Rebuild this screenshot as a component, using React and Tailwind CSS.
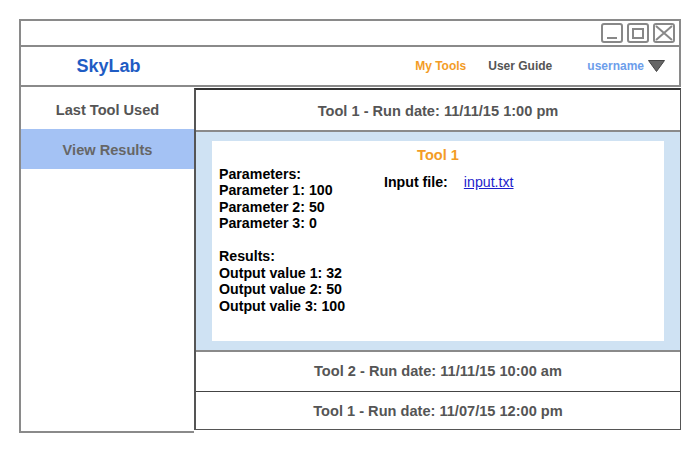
import React from 'react';

const WindowButton = ({ children }) => (
  <div className="w-[22px] h-[20px] border-2 border-[#888] rounded-[3px] flex items-center justify-center">
    {children}
  </div>
);

const RunRow = ({ label, className = '' }) => (
  <div className={`h-[40px] flex items-center justify-center text-[14.6px] font-bold text-[#555] ${className}`}>
    {label}
  </div>
);

export default function App() {
  return (
    <div className="w-[700px] h-[452px] bg-white font-['Liberation_Sans',Arial,sans-serif]">
      <div className="pl-[19px] pt-[19px] w-[681px]">
        {/* Window frame: title bar + header */}
        <div className="border-2 border-[#8a8a8a]">
          <div className="h-[26px] border-b-2 border-[#8a8a8a] flex items-center justify-end gap-[4px] pr-[4px]">
            <WindowButton>
              <div className="w-[10px] h-[2px] bg-[#888] mt-[10px]" />
            </WindowButton>
            <WindowButton>
              <div className="w-[12px] h-[11px] border-2 border-[#888]" />
            </WindowButton>
            <WindowButton>
              <svg width="18" height="16" viewBox="0 0 18 16">
                <path d="M1 1 L17 15 M17 1 L1 15" stroke="#888" strokeWidth="2" />
              </svg>
            </WindowButton>
          </div>
          <div className="h-[38px] flex items-center">
            <div className="w-[175px] text-center text-[18px] font-bold text-[#1f5cc4]">SkyLab</div>
            <div className="flex-1 flex items-center justify-end text-[12px] font-bold pr-[14px]">
              <span className="text-[#f39c26]">My Tools</span>
              <span className="text-[#555] ml-[22px]">User Guide</span>
              <span className="text-[#6d9eeb] ml-[35px]">username</span>
              <svg width="17" height="12" viewBox="0 0 17 12" className="ml-[4px]">
                <path d="M0.5 0.5 L16.5 0.5 L8.5 11.5 Z" fill="#666" stroke="#444" />
              </svg>
            </div>
          </div>
        </div>

        {/* Body */}
        <div className="flex">
          <div className="w-[175px] h-[346px] border-l-2 border-b-2 border-[#8a8a8a]">
            <div className="h-[40px] mt-[2px] pt-[4px] flex items-center justify-center text-[14.6px] font-bold text-[#555]">
              Last Tool Used
            </div>
            <div className="h-[40px] pt-[4px] bg-[#a4c2f4] flex items-center justify-center text-[14.6px] font-bold text-[#666]">
              View Results
            </div>
          </div>

          <div className="flex-1 mt-[1px] border border-[#555] border-l-2 border-l-[#555] border-t-2 border-t-[#333] h-[342px]">
            <RunRow label="Tool 1 - Run date: 11/11/15 1:00 pm" className="h-[39px] pt-[4px]" />
            <div className="border-y-2 border-[#8a8a8a] bg-[#cfe2f3] h-[222px] px-[16px] py-[9px]">
              <div className="bg-white h-[200px] px-[7px] pt-[6px] text-[14.2px] font-bold text-black leading-[16.5px]">
                <div className="text-center text-[14.6px] text-[#f39c26] mb-[2px]">Tool 1</div>
                <div className="flex">
                  <div className="w-[165px]">
                    <div>Parameters:</div>
                    <div>Parameter 1: 100</div>
                    <div>Parameter 2: 50</div>
                    <div>Parameter 3: 0</div>
                    <div className="mt-[16.5px]">Results:</div>
                    <div>Output value 1: 32</div>
                    <div>Output value 2: 50</div>
                    <div>Output valie 3: 100</div>
                  </div>
                  <div className="flex mt-[8px] h-fit">
                    <span>Input file:</span>
                    <a className="ml-[16px] font-normal text-[#1d1dcc] underline">input.txt</a>
                  </div>
                </div>
              </div>
            </div>
            <RunRow label="Tool 2 - Run date: 11/11/15 10:00 am" className="border-b border-[#444]" />
            <RunRow label="Tool 1 - Run date: 11/07/15 12:00 pm" className="h-[38px]" />
          </div>
        </div>
      </div>
    </div>
  );
}
